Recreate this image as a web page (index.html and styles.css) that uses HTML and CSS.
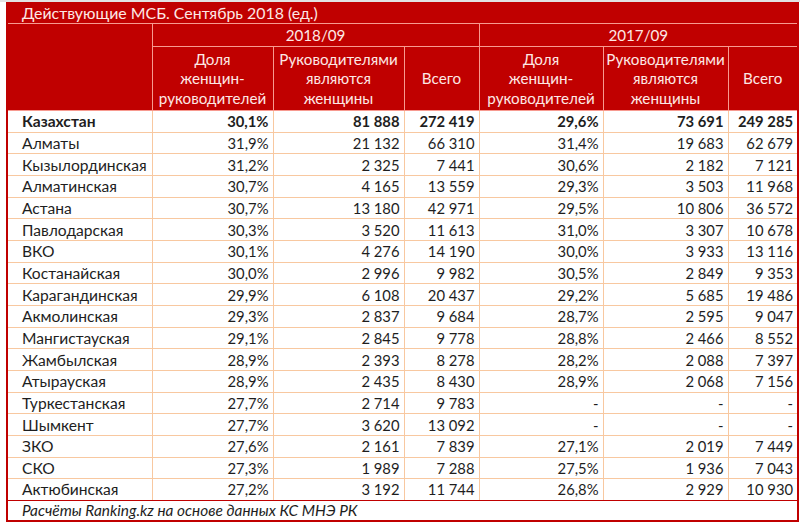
FILE: index.html
```html
<!DOCTYPE html>
<html lang="ru">
<head>
<meta charset="utf-8">
<title>Действующие МСБ</title>
<link rel="stylesheet" href="styles.css">
</head>
<body>
<div class="topstrip"></div>
<div class="frame">
  <div class="title">Действующие МСБ. Сентябрь 2018 (ед.)</div>
  <table class="grid">
    <colgroup>
      <col class="c1"><col class="c2"><col class="c3"><col class="c4"><col class="c5"><col class="c6"><col class="c7">
    </colgroup>
    <thead>
      <tr class="year">
        <th rowspan="2"></th>
        <th colspan="3">2018/09</th>
        <th colspan="3">2017/09</th>
      </tr>
      <tr class="sub">
        <th>Доля<br>женщин-<br>руководителей</th>
        <th>Руководителями<br>являются<br>женщины</th>
        <th>Всего</th>
        <th>Доля<br>женщин-<br>руководителей</th>
        <th>Руководителями<br>являются<br>женщины</th>
        <th>Всего</th>
      </tr>
    </thead>
    <tbody>
      <tr class="total"><td>Казахстан</td><td>30,1%</td><td>81 888</td><td>272 419</td><td>29,6%</td><td>73 691</td><td>249 285</td></tr>
      <tr><td>Алматы</td><td>31,9%</td><td>21 132</td><td>66 310</td><td>31,4%</td><td>19 683</td><td>62 679</td></tr>
      <tr><td>Кызылординская</td><td>31,2%</td><td>2 325</td><td>7 441</td><td>30,6%</td><td>2 182</td><td>7 121</td></tr>
      <tr><td>Алматинская</td><td>30,7%</td><td>4 165</td><td>13 559</td><td>29,3%</td><td>3 503</td><td>11 968</td></tr>
      <tr><td>Астана</td><td>30,7%</td><td>13 180</td><td>42 971</td><td>29,5%</td><td>10 806</td><td>36 572</td></tr>
      <tr><td>Павлодарская</td><td>30,3%</td><td>3 520</td><td>11 613</td><td>31,0%</td><td>3 307</td><td>10 678</td></tr>
      <tr><td>ВКО</td><td>30,1%</td><td>4 276</td><td>14 190</td><td>30,0%</td><td>3 933</td><td>13 116</td></tr>
      <tr><td>Костанайская</td><td>30,0%</td><td>2 996</td><td>9 982</td><td>30,5%</td><td>2 849</td><td>9 353</td></tr>
      <tr><td>Карагандинская</td><td>29,9%</td><td>6 108</td><td>20 437</td><td>29,2%</td><td>5 685</td><td>19 486</td></tr>
      <tr><td>Акмолинская</td><td>29,3%</td><td>2 837</td><td>9 684</td><td>28,7%</td><td>2 595</td><td>9 047</td></tr>
      <tr><td>Мангистауская</td><td>29,1%</td><td>2 845</td><td>9 778</td><td>28,8%</td><td>2 466</td><td>8 552</td></tr>
      <tr><td>Жамбылская</td><td>28,9%</td><td>2 393</td><td>8 278</td><td>28,2%</td><td>2 088</td><td>7 397</td></tr>
      <tr><td>Атырауская</td><td>28,9%</td><td>2 435</td><td>8 430</td><td>28,9%</td><td>2 068</td><td>7 156</td></tr>
      <tr><td>Туркестанская</td><td>27,7%</td><td>2 714</td><td>9 783</td><td>-</td><td>-</td><td>-</td></tr>
      <tr><td>Шымкент</td><td>27,7%</td><td>3 620</td><td>13 092</td><td>-</td><td>-</td><td>-</td></tr>
      <tr><td>ЗКО</td><td>27,6%</td><td>2 161</td><td>7 839</td><td>27,1%</td><td>2 019</td><td>7 449</td></tr>
      <tr><td>СКО</td><td>27,3%</td><td>1 989</td><td>7 288</td><td>27,5%</td><td>1 936</td><td>7 043</td></tr>
      <tr><td>Актюбинская</td><td>27,2%</td><td>3 192</td><td>11 744</td><td>26,8%</td><td>2 929</td><td>10 930</td></tr>
    </tbody>
  </table>
  <div class="note">Расчёты Ranking.kz на основе данных КС МНЭ РК</div>
</div>
</body>
</html>
```

FILE: styles.css
```css
html, body {
  margin: 0;
  padding: 0;
  background: #ffffff;
}
body {
  font-family: Lato, "Noto Sans", sans-serif;
  font-size: 14.8px;
  color: #1e1e1e;
}
.topstrip {
  height: 2px;
  background: #e2e2e2;
}
.frame {
  margin-left: 6px;
  width: 793px;
  box-sizing: border-box;
  border: 2px solid #c00000;
  border-top: none;
}
.title {
  background: #c00000;
  color: #fde8e5;
  height: 21px;
  line-height: 21px;
  padding-left: 14px;
  font-size: 15.9px;
  border-bottom: 1px solid #f79a90;
}
.grid {
  width: 789px;
  table-layout: fixed;
  border-collapse: collapse;
  border-style: hidden;
}
.c1 { width: 144px; }
.c2 { width: 121px; }
.c3 { width: 131px; }
.c4 { width: 75px; }
.c5 { width: 124px; }
.c6 { width: 125px; }
.c7 { width: 69px; }
.grid th {
  background: #c00000;
  color: #fde8e5;
  font-weight: normal;
  font-size: 15.2px;
  text-align: center;
  border: 1px solid #f79a90;
  padding: 0;
}
.year th {
  height: 22px;
  line-height: 22px;
}
.sub th {
  height: 62px;
  line-height: 19.5px;
  vertical-align: middle;
  padding-top: 1px;
}
.grid td {
  height: 20.67px;
  padding: 0 4px 0 0;
  text-align: right;
  border: 1px solid #f8c8a0;
  line-height: 18px;
  white-space: nowrap;
}
.grid td:first-child {
  text-align: left;
  padding-left: 14px;
  font-size: 15.6px;
}
.total td {
  font-weight: bold;
}
.note {
  border-top: 1px solid #c00000;
  height: 19px;
  line-height: 19px;
  padding-left: 14px;
  font-style: italic;
  font-size: 15.4px;
}
```
